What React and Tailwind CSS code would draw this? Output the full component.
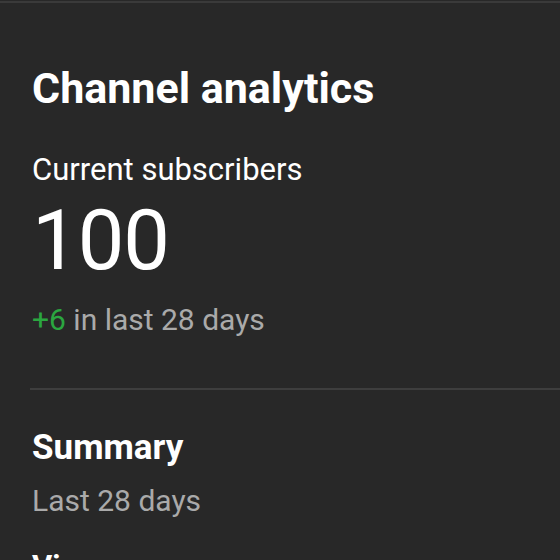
export default function App() {
  return (
    <div className="w-[560px] h-[560px] overflow-hidden bg-[#282828] font-['Roboto',sans-serif]">
      <div className="mt-px border-t-2 border-[#3a3a3a] pl-[32px]">
        <h1 className="mt-[64px] text-[43px] leading-[43px] font-bold text-white">Channel analytics</h1>
        <div className="mt-[44px] text-[31px] leading-[31px] text-white">Current subscribers</div>
        <div className="mt-[14px] text-[83px] leading-[83px] tracking-[-1px] text-white">100</div>
        <div className="mt-[23px] text-[30px] leading-[30px] text-[#aaaaaa]">
          <span className="text-[#2ba640]">+6</span> in last 28 days
        </div>
        <div className="mt-[53px] -ml-[2px] h-[2px] bg-[#3e3e3e]" />
        <h2 className="mt-[40px] text-[35px] leading-[35px] font-bold text-white">Summary</h2>
        <div className="mt-[21px] text-[30px] leading-[30px] text-[#aaaaaa]">Last 28 days</div>
        <div className="mt-[35px] text-[31px] leading-[31px] font-bold text-white">Views</div>
      </div>
    </div>
  );
}
